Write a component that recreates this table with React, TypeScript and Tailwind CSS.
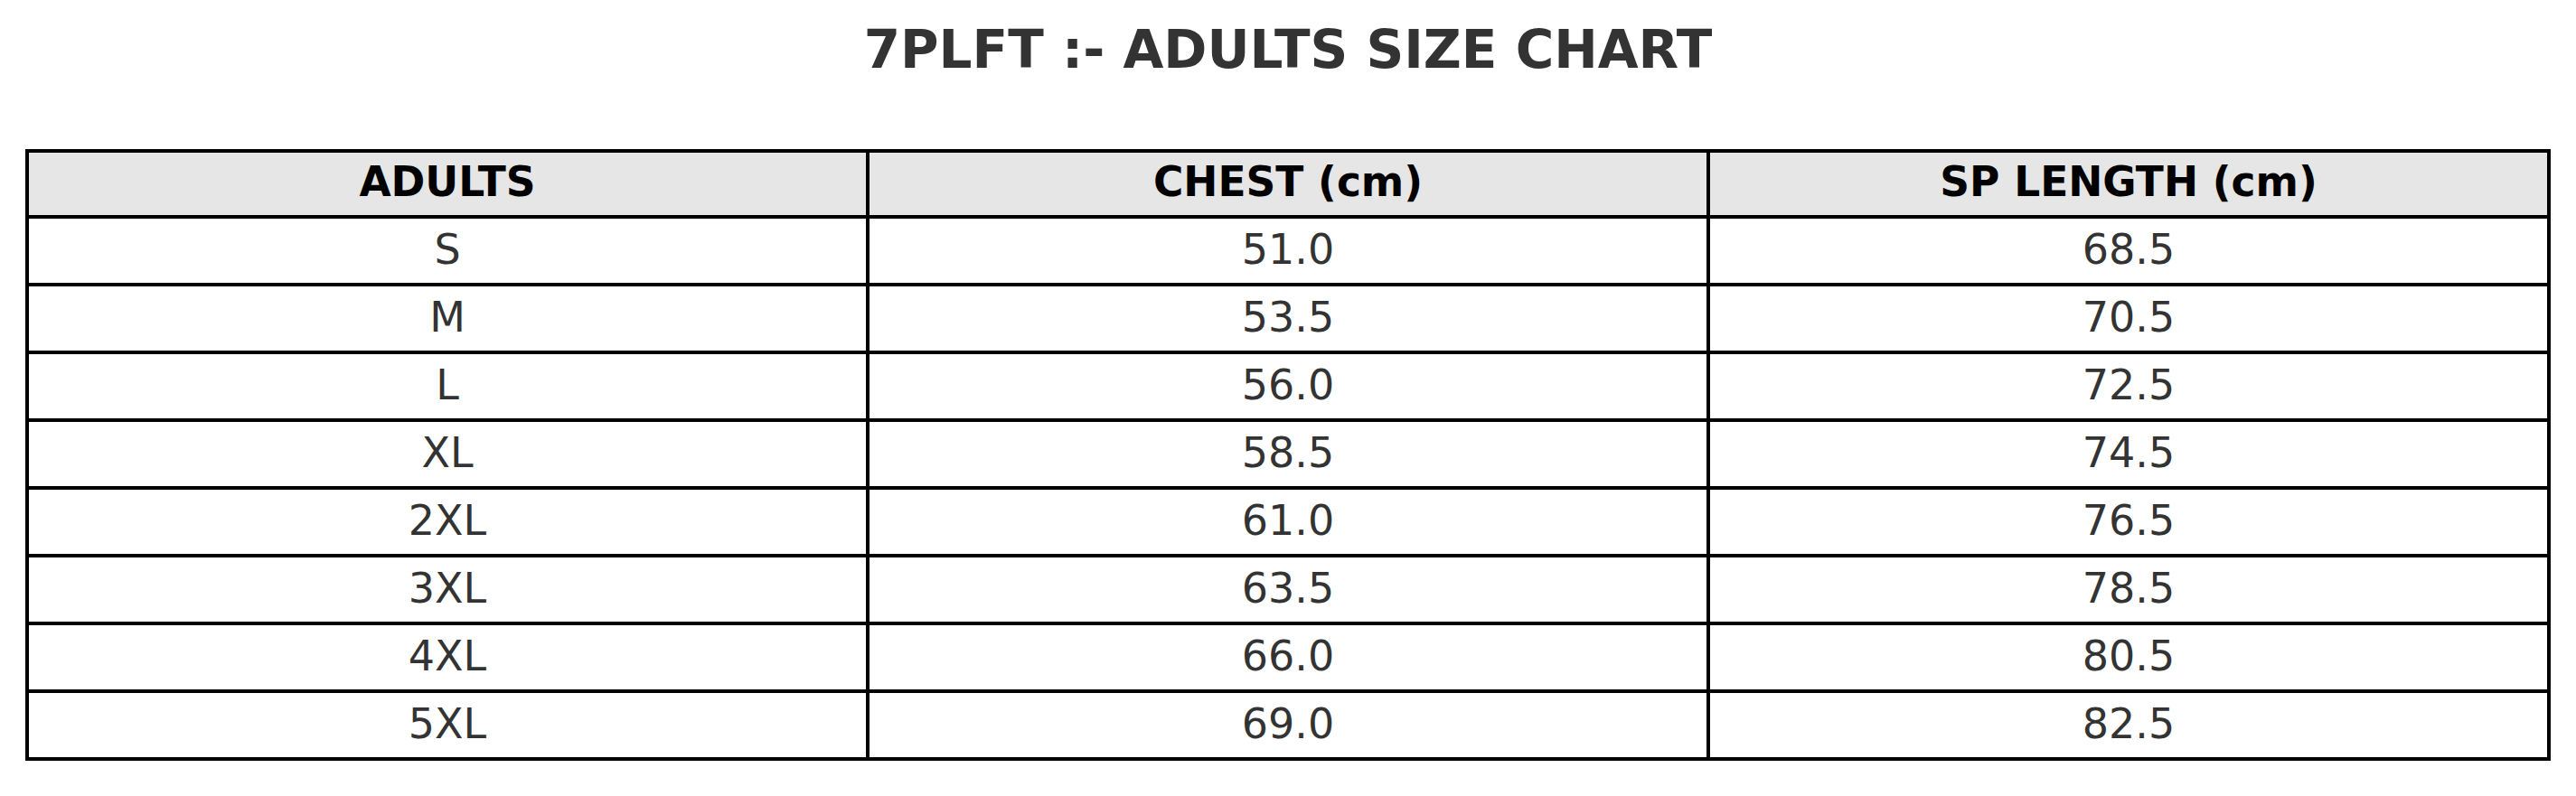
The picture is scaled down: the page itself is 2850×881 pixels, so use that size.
const rows = [
  ["S", "51.0", "68.5"],
  ["M", "53.5", "70.5"],
  ["L", "56.0", "72.5"],
  ["XL", "58.5", "74.5"],
  ["2XL", "61.0", "76.5"],
  ["3XL", "63.5", "78.5"],
  ["4XL", "66.0", "80.5"],
  ["5XL", "69.0", "82.5"],
];

const headers = ["ADULTS", "CHEST (cm)", "SP LENGTH (cm)"];

export default function App() {
  return (
    <div className="w-[2850px] h-[881px] bg-white px-[28px] font-['DejaVu_Sans',sans-serif]">
      {/* Title */}
      <h1 className="pt-[26px] text-center text-[58px] leading-none font-bold text-[#333333]">
        7PLFT :- ADULTS SIZE CHART
      </h1>

      {/* Size table */}
      <div className="mt-[81px] grid grid-cols-3 border-t-4 border-l-4 border-black">
        {headers.map((h) => (
          <div
            key={h}
            className="h-[73px] pb-[3px] flex items-center justify-center bg-[#e6e6e6] border-r-4 border-b-4 border-black text-[45.5px] leading-none font-bold text-black"
          >
            {h}
          </div>
        ))}
        {rows.map((row) =>
          row.map((cell, i) => (
            <div
              key={row[0] + i}
              className="h-[75px] pb-[3px] flex items-center justify-center border-r-4 border-b-4 border-black text-[46px] leading-none text-[#333333]"
            >
              {cell}
            </div>
          ))
        )}
      </div>
    </div>
  );
}
